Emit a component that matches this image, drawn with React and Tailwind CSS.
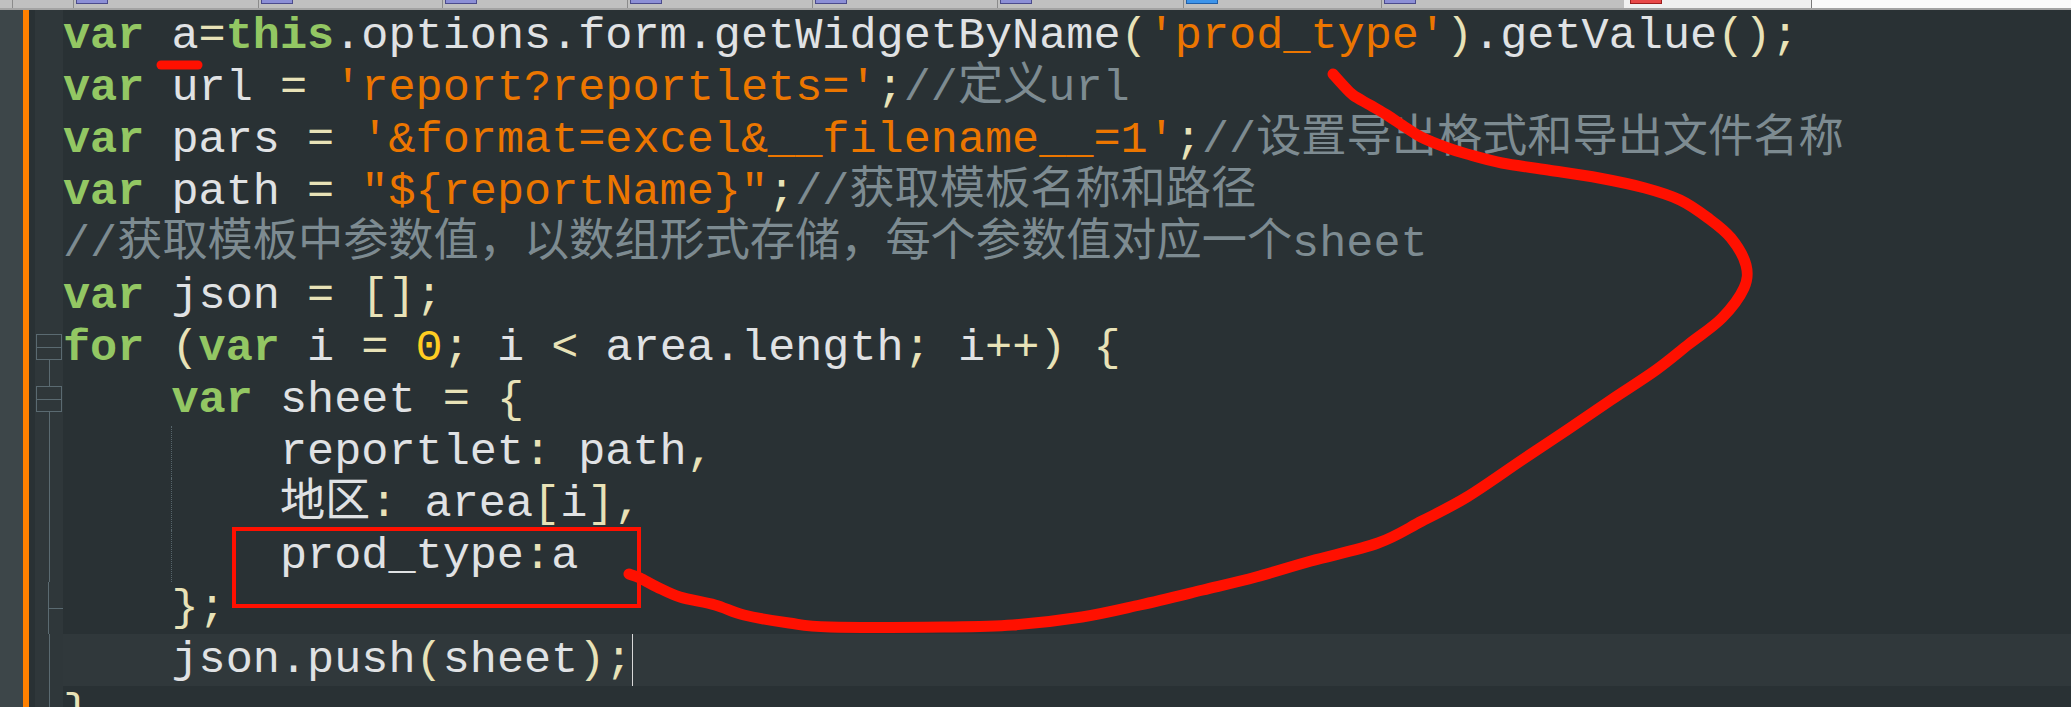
import React from "react";

const K = "text-[#93c763] font-bold";
const I = "text-[#e0e2e4]";
const O = "text-[#e8e2b7]";
const S = "text-[#ec7600]";
const C = "text-[#7d8b91]";
const N = "text-[#ffcd22]";

const lines = [
  [["var", K], [" a", I], ["=", O], ["this", K], [".options.form.getWidgetByName", I], ["(", O], ["'prod_type'", S], [")", O], [".getValue", I], ["();", O]],
  [["var", K], [" url ", I], ["=", O], [" ", I], ["'report?reportlets='", S], [";", O], ["//定义url", C]],
  [["var", K], [" pars ", I], ["=", O], [" ", I], ["'&format=excel&__filename__=1'", S], [";", O], ["//设置导出格式和导出文件名称", C]],
  [["var", K], [" path ", I], ["=", O], [" ", I], ['"${reportName}"', S], [";", O], ["//获取模板名称和路径", C]],
  [["//获取模板中参数值，以数组形式存储，每个参数值对应一个sheet", C]],
  [["var", K], [" json ", I], ["=", O], [" ", I], ["[];", O]],
  [["for", K], [" ", I], ["(", O], ["var", K], [" i ", I], ["=", O], [" ", I], ["0", N], [";", O], [" i ", I], ["<", O], [" area.length", I], [";", O], [" i", I], ["++", O], [")", O], [" ", I], ["{", O]],
  [["    ", I], ["var", K], [" sheet ", I], ["=", O], [" ", I], ["{", O]],
  [["reportlet", I], [":", O], [" path", I], [",", O]],
  [["地区", I], [":", O], [" area", I], ["[", O], ["i", I], ["],", O]],
  [["prod_type", I], [":", O], ["a", I]],
  [["    ", I], ["};", O]],
  [["    json.push", I], ["(", O], ["sheet", I], [");", O]],
  [["}", O]],
];

// lines that sit inside the sheet block get the dotted indent guide
const guided = [8, 9, 10];
const folds = ["none", "none", "none", "none", "none", "none", "first", "open", "line", "line", "line", "end", "line", "line"];

const tabs = [
  { w: 12, icon: null },
  { w: 61, icon: null },
  { w: 185, icon: "purple" },
  { w: 184, icon: "purple" },
  { w: 185, icon: "purple" },
  { w: 185, icon: "purple" },
  { w: 185, icon: "purple" },
  { w: 186, icon: "purple" },
  { w: 198, icon: "blue" },
  { w: 243, icon: "purple" },
];

const curve = [
  [1333, 74], [1342, 84], [1353, 95], [1370, 105], [1387, 115], [1405, 127], [1421, 137], [1445, 147],
  [1467, 154], [1502, 163], [1548, 170], [1599, 178], [1645, 188], [1680, 200], [1708, 218], [1731, 238],
  [1746, 265], [1744, 288], [1722, 318], [1689, 344], [1656, 370], [1611, 400], [1567, 430], [1522, 460],
  [1467, 497], [1422, 521], [1378, 543], [1311, 561], [1256, 577], [1203, 590], [1140, 605], [1082, 617],
  [1013, 625], [944, 627], [830, 627], [789, 623], [744, 615], [715, 605], [680, 597], [657, 587],
  [640, 578], [629, 574],
];

function smoothPath(pts) {
  let d = `M${pts[0][0]},${pts[0][1]}`;
  for (let i = 0; i < pts.length - 1; i++) {
    const p0 = pts[i - 1] || pts[i];
    const p1 = pts[i];
    const p2 = pts[i + 1];
    const p3 = pts[i + 2] || p2;
    const c1 = [p1[0] + (p2[0] - p0[0]) / 6, p1[1] + (p2[1] - p0[1]) / 6];
    const c2 = [p2[0] - (p3[0] - p1[0]) / 6, p2[1] - (p3[1] - p1[1]) / 6];
    d += ` C${c1[0]},${c1[1]} ${c2[0]},${c2[1]} ${p2[0]},${p2[1]}`;
  }
  return d;
}

const TabIcon = ({ kind }) => {
  const colors = {
    purple: "bg-[#8c8fd6] border-[#4b4b8c]",
    blue: "bg-[#3d94ea] border-[#1f5fa8]",
    red: "bg-[#e84848] border-[#9c1e1e]",
  };
  return <div className={`ml-[2px] w-[32px] h-[4px] border-x border-b ${colors[kind]}`} />;
};

const FoldCell = ({ kind }) => {
  if (kind === "none") return <div className="h-[52px] shrink-0" />;
  if (kind === "line")
    return (
      <div className="h-[52px] shrink-0 flex justify-center">
        <div className="w-px bg-[#5a6a71]" />
      </div>
    );
  if (kind === "end")
    return (
      <div className="h-[52px] shrink-0 flex">
        <div className="w-[13px]" />
        <div className="w-px bg-[#5a6a71]" />
        <div className="flex-1 flex flex-col justify-center">
          <div className="h-px bg-[#5a6a71]" />
        </div>
      </div>
    );
  return (
    <div className="h-[52px] shrink-0 flex flex-col items-center">
      <div className={`h-[12px] w-px ${kind === "open" ? "bg-[#5a6a71]" : ""}`} />
      <div className="w-[26px] h-[26px] border border-[#5a6a71] flex items-center justify-center">
        <div className="w-[24px] h-px bg-[#5a6a71]" />
      </div>
      <div className="flex-1 w-px bg-[#5a6a71]" />
    </div>
  );
};

const CodeLine = ({ tokens, index }) => {
  const current = index === 12;
  const guide = guided.includes(index);
  return (
    <div className={`h-[52px] shrink-0 whitespace-pre leading-[52px] ${current ? "bg-[#30383b]" : ""}`}>
      {guide && (
        <>
          <span>{"    "}</span>
          <span className="inline-block h-[52px] align-top border-l border-dotted border-[#56656b] -mr-px" />
          <span>{"    "}</span>
        </>
      )}
      {tokens.map(([t, cls], i) => (
        <span key={i} className={cls}>
          {t}
        </span>
      ))}
      {current && <span className="inline-block w-px h-[52px] align-top bg-[#d8d8d8]" />}
    </div>
  );
};

export default function App() {
  return (
    <div className="relative w-[2071px] h-[707px] overflow-hidden bg-[#293134] flex flex-col font-['Liberation_Mono','Noto_Sans_CJK_SC',monospace]">
      <div className="h-[10px] shrink-0 flex border-b-2 border-[#a3a3a3]">
        <div className="flex bg-[#c0c0c0]">
          {tabs.map((t, i) => (
            <div key={i} className={`h-full shrink-0 ${i > 0 ? "border-l border-[#8b8b8b]" : ""}`} style={{ width: t.w }}>
              {t.icon && <TabIcon kind={t.icon} />}
            </div>
          ))}
        </div>
        <div className="w-[187px] shrink-0 bg-[#f0f0f0]">
          <div className="ml-[4px]">
            <TabIcon kind="red" />
          </div>
        </div>
        <div className="flex-1 bg-[#fafafa] border-l border-[#7a7a7a]" />
      </div>

      <div className="flex-1 flex overflow-hidden text-[45.2px]">
        <div className="w-[23px] shrink-0 bg-[#3d4649]" />
        <div className="w-[6px] shrink-0 bg-[#ff8000]" />
        <div className="w-[6px] shrink-0 bg-[#293134]" />
        <div className="w-[28px] shrink-0 bg-[#2f373a] flex flex-col">
          {folds.map((f, i) => (
            <FoldCell key={i} kind={f} />
          ))}
        </div>
        <div className="flex-1 flex flex-col">
          {lines.map((tokens, i) => (
            <CodeLine key={i} tokens={tokens} index={i} />
          ))}
        </div>
      </div>

      <svg className="absolute inset-0 pointer-events-none" width="2071" height="707" viewBox="0 0 2071 707">
        <line x1="161" y1="65" x2="198" y2="65" stroke="#ff1000" strokeWidth="9" strokeLinecap="round" />
        <rect x="234" y="529" width="405" height="77" fill="none" stroke="#ff1000" strokeWidth="4" />
        <path d={smoothPath(curve)} fill="none" stroke="#ff1000" strokeWidth="11" strokeLinecap="round" strokeLinejoin="round" />
      </svg>
    </div>
  );
}
